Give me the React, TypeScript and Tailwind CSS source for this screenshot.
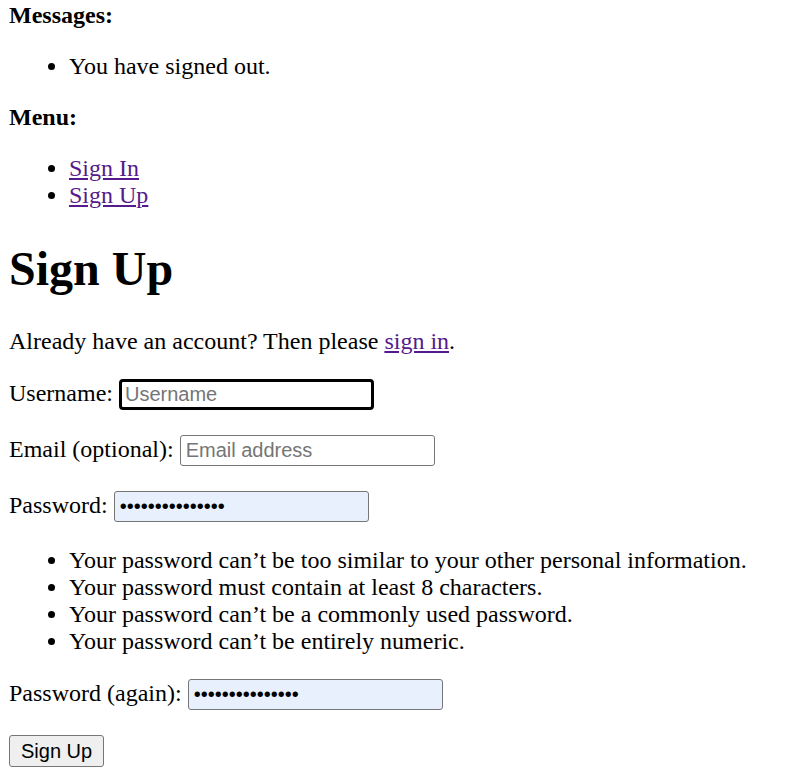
import React from "react";

export default function App() {
  const base =
    "inline-block align-baseline w-[255px] h-[31px] mb-px font-['Liberation_Sans',Arial,sans-serif] text-[20px] leading-[23px] text-black placeholder:text-[#757575] outline-none";
  const input = base + " border border-[#767676] rounded-[3px] px-[5px]";
  return (
    <div className="bg-white min-h-[782px] pl-[9px] pt-[2px] font-['Liberation_Serif','Times_New_Roman',serif] text-[24px] leading-[27px] text-black">
      <div>
        <strong className="font-bold">Messages:</strong>
      </div>
      <ul className="list-disc pl-[60px] my-[24px]">
        <li>You have signed out.</li>
      </ul>
      <div>
        <strong className="font-bold">Menu:</strong>
      </div>
      <ul className="list-disc pl-[60px] my-[24px]">
        <li>
          <a href="#" className="text-[#551a8b] underline">Sign In</a>
        </li>
        <li>
          <a href="#" className="text-[#551a8b] underline">Sign Up</a>
        </li>
      </ul>
      <h1 className="text-[48px] leading-[55px] font-bold my-[32px]">Sign Up</h1>
      <p className="my-[24px]">
        Already have an account? Then please{" "}
        <a href="#" className="text-[#551a8b] underline">sign in</a>.
      </p>
      <form onSubmit={(e) => e.preventDefault()}>
        <p className="my-[24px]">
          <label>Username:</label>{" "}
          <input
            type="text"
            placeholder="Username"
            className={base + " border-[3px] border-black rounded-[4px] px-[3px]"}
          />
        </p>
        <p className="my-[24px]">
          <label>Email (optional):</label>{" "}
          <input type="email" placeholder="Email address" className={input} />
        </p>
        <p className="my-[24px]">
          <label>Password:</label>{" "}
          <input type="password" defaultValue="passwordpasswor" className={input + " bg-[#e8f0fe]"} />
        </p>
        <ul className="list-disc pl-[60px] my-[24px]">
          <li>Your password can’t be too similar to your other personal information.</li>
          <li>Your password must contain at least 8 characters.</li>
          <li>Your password can’t be a commonly used password.</li>
          <li>Your password can’t be entirely numeric.</li>
        </ul>
        <p className="my-[24px]">
          <label>Password (again):</label>{" "}
          <input type="password" defaultValue="passwordpasswor" className={input + " bg-[#e8f0fe]"} />
        </p>
        <button
          type="submit"
          className="h-[32px] px-[11px] bg-[#efefef] border border-[#767676] rounded-[3px] font-['Liberation_Sans',Arial,sans-serif] text-[20px] leading-[23px] text-black"
        >
          Sign Up
        </button>
      </form>
    </div>
  );
}
